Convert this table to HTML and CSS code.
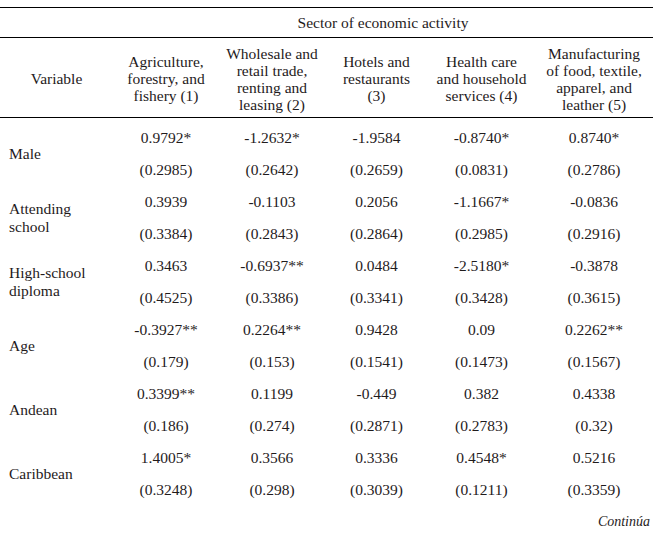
FILE: index.html
```html
<!DOCTYPE html>
<html lang="en">
<head>
<meta charset="utf-8">
<title>Sector of economic activity</title>
<link rel="stylesheet" href="styles.css">
</head>
<body>
<div class="page">
<table class="tbl">
  <colgroup>
    <col class="c-var"><col class="c1"><col class="c2"><col class="c3"><col class="c4"><col class="c5">
  </colgroup>
  <thead>
    <tr class="super">
      <th></th>
      <th colspan="5">Sector of economic activity</th>
    </tr>
    <tr class="heads">
      <th>Variable</th>
      <th>Agriculture,<br>forestry, and<br>fishery (1)</th>
      <th>Wholesale and<br>retail trade,<br>renting and<br>leasing (2)</th>
      <th>Hotels and<br>restaurants<br>(3)</th>
      <th>Health care<br>and household<br>services (4)</th>
      <th>Manufacturing<br>of food, textile,<br>apparel, and<br>leather (5)</th>
    </tr>
  </thead>
  <tbody>
    <tr><td class="lbl" rowspan="2">Male</td><td>0.9792*</td><td>-1.2632*</td><td>-1.9584</td><td>-0.8740*</td><td>0.8740*</td></tr>
    <tr><td>(0.2985)</td><td>(0.2642)</td><td>(0.2659)</td><td>(0.0831)</td><td>(0.2786)</td></tr>
    <tr><td class="lbl" rowspan="2">Attending<br>school</td><td>0.3939</td><td>-0.1103</td><td>0.2056</td><td>-1.1667*</td><td>-0.0836</td></tr>
    <tr><td>(0.3384)</td><td>(0.2843)</td><td>(0.2864)</td><td>(0.2985)</td><td>(0.2916)</td></tr>
    <tr><td class="lbl" rowspan="2">High-school<br>diploma</td><td>0.3463</td><td>-0.6937**</td><td>0.0484</td><td>-2.5180*</td><td>-0.3878</td></tr>
    <tr><td>(0.4525)</td><td>(0.3386)</td><td>(0.3341)</td><td>(0.3428)</td><td>(0.3615)</td></tr>
    <tr><td class="lbl" rowspan="2">Age</td><td>-0.3927**</td><td>0.2264**</td><td>0.9428</td><td>0.09</td><td>0.2262**</td></tr>
    <tr><td>(0.179)</td><td>(0.153)</td><td>(0.1541)</td><td>(0.1473)</td><td>(0.1567)</td></tr>
    <tr><td class="lbl" rowspan="2">Andean</td><td>0.3399**</td><td>0.1199</td><td>-0.449</td><td>0.382</td><td>0.4338</td></tr>
    <tr><td>(0.186)</td><td>(0.274)</td><td>(0.2871)</td><td>(0.2783)</td><td>(0.32)</td></tr>
    <tr><td class="lbl" rowspan="2">Caribbean</td><td>1.4005*</td><td>0.3566</td><td>0.3336</td><td>0.4548*</td><td>0.5216</td></tr>
    <tr><td>(0.3248)</td><td>(0.298)</td><td>(0.3039)</td><td>(0.1211)</td><td>(0.3359)</td></tr>
  </tbody>
</table>
<p class="cont">Continúa</p>
</div>
</body>
</html>
```

FILE: styles.css
```css
html, body {
  margin: 0;
  padding: 0;
  background: #ffffff;
}
body {
  font-family: "Liberation Serif", serif;
  font-size: 15.5px;
  color: #1f1b1c;
}
.page {
  width: 653px;
  padding-top: 7px;
}
.tbl {
  width: 653px;
  border-collapse: collapse;
  table-layout: fixed;
}
.c-var { width: 113px; }
.c1 { width: 106px; }
.c2 { width: 106px; }
.c3 { width: 103px; }
.c4 { width: 107px; }
.c5 { width: 118px; }
.tbl th {
  font-weight: normal;
  text-align: center;
  vertical-align: middle;
  padding: 0 1px;
  line-height: 17px;
}
.super th {
  border-top: 1px solid #000;
  height: 29px;
}
.heads th {
  border-top: 1px solid #000;
  border-bottom: 1px solid #000;
  height: 77px;
  padding-top: 2px;
}
.tbl td {
  text-align: center;
  vertical-align: middle;
  line-height: 18px;
  height: 18px;
  padding: 11px 2px 3px;
  white-space: nowrap;
}
.tbl td.lbl {
  text-align: left;
  padding-left: 9px;
}
.cont {
  margin: 11px 0 0;
  text-align: right;
  font-style: italic;
  font-size: 14px;
  line-height: 18px;
  padding-right: 3px;
}
```
